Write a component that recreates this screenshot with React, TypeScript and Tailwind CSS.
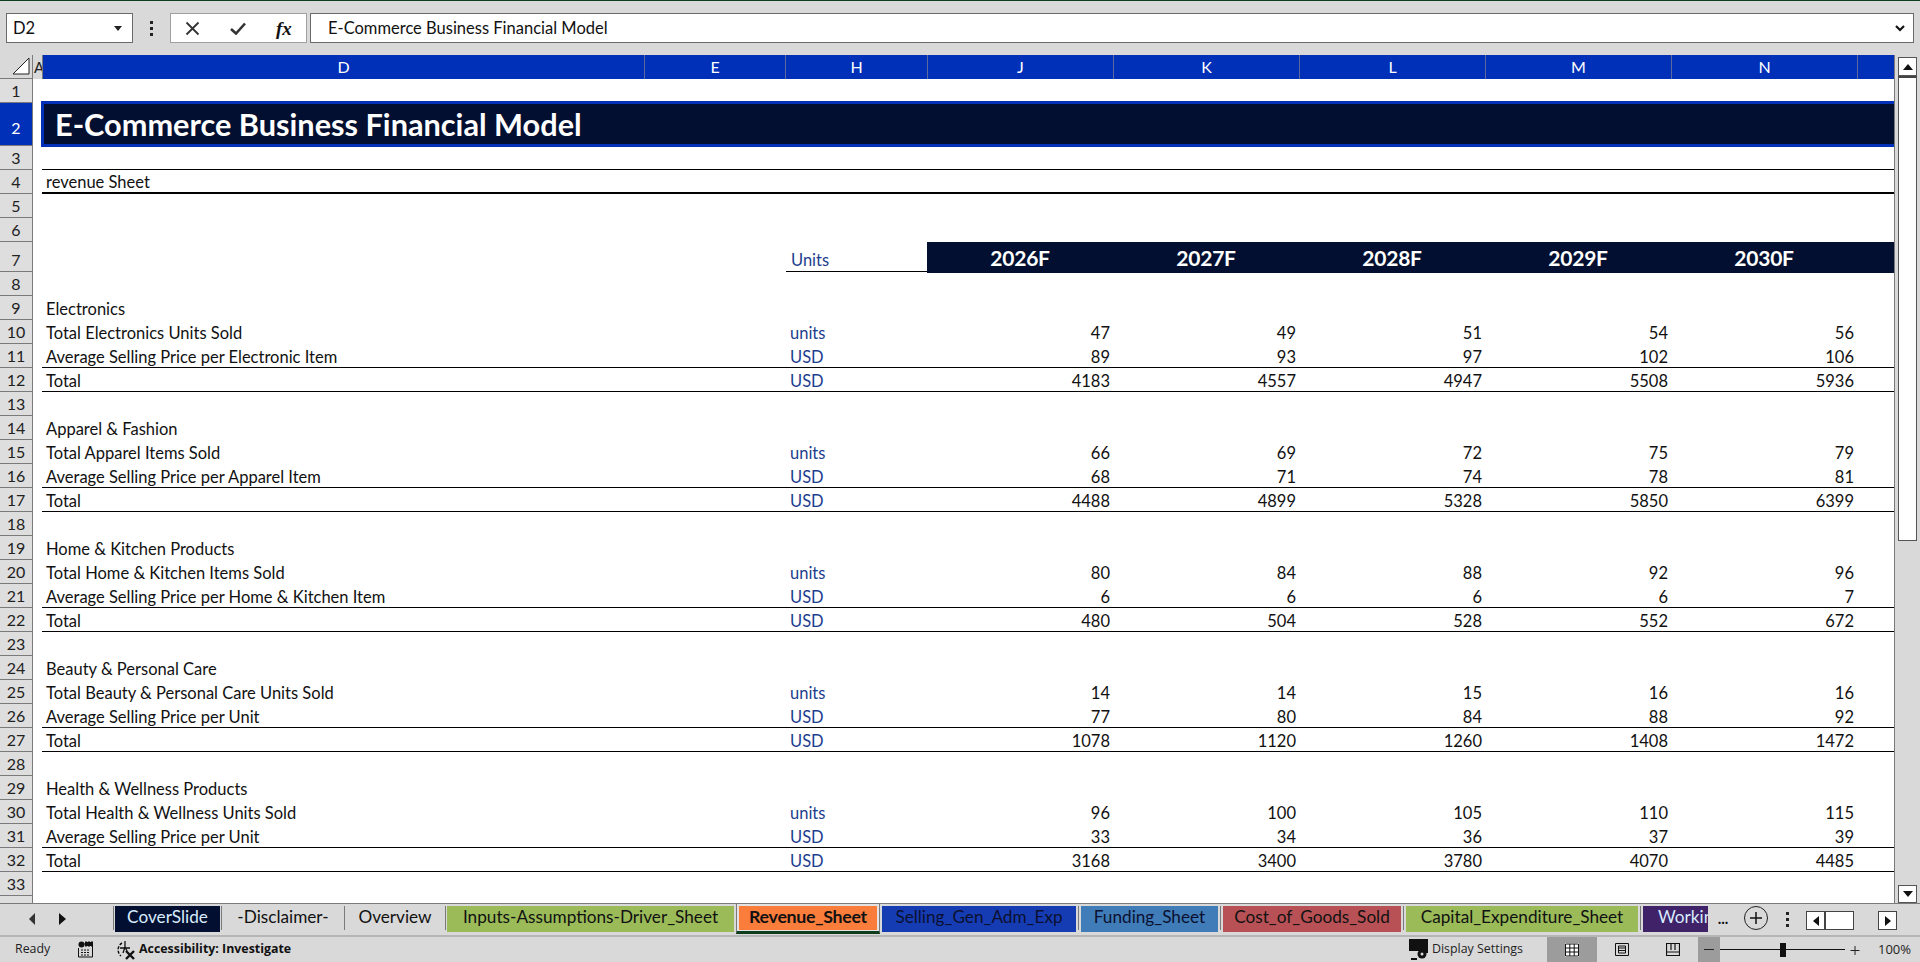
const font = { fontFamily: '"Lato", "Liberation Sans", sans-serif' };
const ui = { fontFamily: '"Open Sans", "Liberation Sans", sans-serif' };

const years = ["2026F", "2027F", "2028F", "2029F", "2030F"];
const letters = ["J", "K", "L", "M", "N"];

type Section = {
  start: number;
  title: string;
  units: [string, (number | string)[]];
  price: [string, (number | string)[]];
  total: (number | string)[];
};

const sections: Section[] = [
  {
    start: 9,
    title: "Electronics",
    units: ["Total Electronics Units Sold", [47, 49, 51, 54, 56]],
    price: ["Average Selling Price per Electronic Item", [89, 93, 97, 102, 106]],
    total: [4183, 4557, 4947, 5508, 5936],
  },
  {
    start: 14,
    title: "Apparel & Fashion",
    units: ["Total Apparel Items Sold", [66, 69, 72, 75, 79]],
    price: ["Average Selling Price per Apparel Item", [68, 71, 74, 78, 81]],
    total: [4488, 4899, 5328, 5850, 6399],
  },
  {
    start: 19,
    title: "Home & Kitchen Products",
    units: ["Total Home & Kitchen Items Sold", [80, 84, 88, 92, 96]],
    price: ["Average Selling Price per Home & Kitchen Item", [6, 6, 6, 6, 7]],
    total: [480, 504, 528, 552, 672],
  },
  {
    start: 24,
    title: "Beauty & Personal Care",
    units: ["Total Beauty & Personal Care Units Sold", [14, 14, 15, 16, 16]],
    price: ["Average Selling Price per Unit", [77, 80, 84, 88, 92]],
    total: [1078, 1120, 1260, 1408, 1472],
  },
  {
    start: 29,
    title: "Health & Wellness Products",
    units: ["Total Health & Wellness Units Sold", [96, 100, 105, 110, 115]],
    price: ["Average Selling Price per Unit", [33, 34, 36, 37, 39]],
    total: [3168, 3400, 3780, 4070, 4485],
  },
];

function RowHead({ n, active, h = "h-[24px]" }: { n?: number; active?: boolean; h?: string }) {
  return (
    <div
      className={`${h} w-[33px] shrink-0 flex items-end justify-center border-r border-b border-[#7a7a7a] text-[16px] leading-[20px] ${
        active ? "bg-[#0030b8] text-white pb-[7px]" : "bg-[#dedede] text-[#222] pb-[1px]"
      }`}
    >
      {n}
    </div>
  );
}

function Row({
  n,
  line,
  label,
  unit,
  values,
}: {
  n?: number;
  line?: boolean;
  label?: string;
  unit?: string;
  values?: (number | string)[];
}) {
  return (
    <div className="flex h-[24px]">
      <RowHead n={n} />
      <div className="w-[9px] shrink-0" />
      <div className={`flex flex-1 items-end leading-[20px] text-[16.5px] text-[#111] ${line ? "border-b border-black" : "mb-[1px]"}`}>
        <div className="w-[603px] pl-[4px] whitespace-nowrap">{label}</div>
        <div className="w-[141px]" />
        <div className="w-[142px] pl-[4px] text-[#1d3e8e]">{unit}</div>
        {values?.map((v, i) => (
          <div key={i} className="w-[186px] pr-[4px] text-right">
            {v}
          </div>
        ))}
      </div>
    </div>
  );
}

function ColHead({ label, w }: { label: string; w: string }) {
  return (
    <div className={`${w} shrink-0 h-full flex items-center justify-center text-white text-[16px] border-r border-[#5b6a9c]`}>
      {label}
    </div>
  );
}

function Sheet() {
  const rows = [];
  for (const s of sections) {
    rows.push(<Row key={s.start} n={s.start} label={s.title} />);
    rows.push(<Row key={s.start + 1} n={s.start + 1} label={s.units[0]} unit="units" values={s.units[1]} />);
    rows.push(<Row key={s.start + 2} n={s.start + 2} line label={s.price[0]} unit="USD" values={s.price[1]} />);
    rows.push(<Row key={s.start + 3} n={s.start + 3} line label="Total" unit="USD" values={s.total} />);
    rows.push(<Row key={s.start + 4} n={s.start + 4} />);
  }
  return (
    <div className="w-[1895px] shrink-0 h-full overflow-hidden border-r border-[#7a7a7a] bg-white" style={font}>
      <div className="flex h-[24px]">
        <div className="w-[33px] shrink-0 h-full border-r border-b border-[#7a7a7a] flex items-end justify-end pr-[2px] pb-[3px] bg-[#d9d9d9]">
          <svg width="18" height="18" viewBox="0 0 18 18">
            <path d="M17 1V17H1Z" fill="#fff" stroke="#222" strokeWidth="1" />
          </svg>
        </div>
        <div className="w-[10px] shrink-0 h-full overflow-hidden bg-[#d9d9d9] border-r border-[#7a7a7a] text-[15px] leading-[24px] text-[#222] pl-[1px]">A</div>
        <div className="flex flex-1 h-full bg-[#0030b8]">
          <ColHead label="D" w="w-[602px]" />
          <ColHead label="E" w="w-[141px]" />
          <ColHead label="H" w="w-[142px]" />
          {letters.map((l) => (
            <ColHead key={l} label={l} w="w-[186px]" />
          ))}
        </div>
      </div>
      <Row n={1} />
      <div className="flex h-[43px]">
        <RowHead n={2} active h="h-[43px]" />
        <div className="w-[8px] shrink-0" />
        <div className="flex-1 h-[46px] -mt-[2px] relative border-y-[3px] border-l-[3px] border-[#0030b8] bg-[#030f30] flex items-center pl-[11px] pt-[3px] text-white font-bold text-[30.7px]">
          E-Commerce Business Financial Model
        </div>
      </div>
      <Row n={3} line />
      <div className="flex h-[24px]">
        <RowHead n={4} />
        <div className="w-[9px] shrink-0" />
        <div className="flex-1 border-b-2 border-black pl-[4px] text-[16.5px] leading-[22px] pt-[1px] text-[#111]">revenue Sheet</div>
      </div>
      <Row n={5} />
      <Row n={6} />
      <div className="flex h-[30px]">
        <RowHead n={7} h="h-[30px]" />
        <div className="w-[9px] shrink-0" />
        <div className="w-[744px] shrink-0" />
        <div className="w-[141px] shrink-0 border-b border-black pl-[5px] text-[16.5px] leading-[20px] pt-[8px] text-[#1d3e8e]">Units</div>
        <div className="flex flex-1 h-[31px] bg-[#030f30] relative">
          {years.map((y) => (
            <div key={y} className="w-[186px] flex items-center justify-center text-white font-bold text-[21px] tracking-[-0.2px] pt-[1px]">
              {y}
            </div>
          ))}
        </div>
      </div>
      <Row n={8} />
      {rows}
      <Row />
    </div>
  );
}

function Scrollbar() {
  return (
    <div className="flex-1 flex flex-col items-center pt-[2px]">
      <div className="w-[19px] h-[19px] bg-white border border-[#555] flex items-center justify-center">
        <svg width="10" height="6" viewBox="0 0 10 6"><path d="M5 0L10 6H0Z" fill="#111" /></svg>
      </div>
      <div className="w-[19px] h-[465px] bg-white border border-t-2 border-[#555] border-t-[#444]" />
      <div className="flex-1" />
      <div className="w-[19px] h-[18px] bg-white border border-[#555] flex items-center justify-center">
        <svg width="10" height="6" viewBox="0 0 10 6"><path d="M0 0H10L5 6Z" fill="#111" /></svg>
      </div>
    </div>
  );
}

function Sep({ wide }: { wide?: boolean }) {
  return <div className={`w-[1px] h-[24px] bg-[#7a7a7a] shrink-0 ${wide ? "mx-[2px]" : "mx-[1px]"}`} />;
}

function Tab({ label, w, cls }: { label: string; w: string; cls: string }) {
  return (
    <div className={`${w} h-[26px] shrink-0 flex items-center justify-center overflow-hidden whitespace-nowrap text-[17.2px] pb-[4px] ${cls}`}>
      {label}
    </div>
  );
}

function TabBar() {
  return (
    <div className="h-[32px] shrink-0 flex border-t border-[#7a7a7a] pt-[2px] bg-[#d9d9d9]" style={font}>
      <div className="w-[112px] shrink-0 flex items-center pl-[29px] gap-[23px] h-[26px]">
        <svg width="7" height="12" viewBox="0 0 7 12"><path d="M6 0V12L0 6Z" fill="#333" /></svg>
        <svg width="7" height="12" viewBox="0 0 7 12"><path d="M0 0V12L7 6Z" fill="#111" /></svg>
      </div>
      <Sep />
      <Tab label="CoverSlide" w="w-[105px]" cls="bg-[#030f30] text-[#d8ecff]" />
      <Sep />
      <Tab label="-Disclaimer-" w="w-[120px]" cls="text-[#111]" />
      <Sep />
      <Tab label="Overview" w="w-[98px]" cls="text-[#111]" />
      <Sep />
      <Tab label="Inputs-Assumptions-Driver_Sheet" w="w-[287px]" cls="bg-[#9bbb59] text-[#111]" />
      <div className="w-[144px] h-[30px] -mt-[2px] shrink-0 ml-[2px] bg-[#e3e3e3] border-l border-r border-[#7a7a7a] border-b-[3px] border-b-[#0e3d1e] px-[2px] pt-[2px] pb-[1px]">
        <div className="h-full bg-[#fb7d3c] flex items-center justify-center text-[17.8px] font-bold tracking-[-0.3px] pb-[3px] text-[#111]">Revenue_Sheet</div>
      </div>
      <div className="w-[2px]" />
      <Tab label="Selling_Gen_Adm_Exp" w="w-[194px]" cls="bg-[#163cb4] text-[#0b1030]" />
      <Sep wide />
      <Tab label="Funding_Sheet" w="w-[137px]" cls="bg-[#3f7cb8] text-[#0b1030]" />
      <Sep wide />
      <Tab label="Cost_of_Goods_Sold" w="w-[178px]" cls="bg-[#b85155] text-[#111]" />
      <Sep wide />
      <Tab label="Capital_Expenditure_Sheet" w="w-[232px]" cls="bg-[#9bbb59] text-[#111]" />
      <Sep wide />
      <div className="w-[65px] h-[26px] shrink-0 overflow-hidden whitespace-nowrap bg-[#3f2268] text-[#d8ecff] text-[17.2px] pl-[15px] leading-[22px]">Working</div>
      <div className="w-[30px] shrink-0 text-center text-[#111] text-[15px] leading-[24px] font-bold">...</div>
      <div className="w-[24px] h-[24px] ml-[6px] shrink-0 rounded-full border border-[#222] flex items-center justify-center">
        <svg width="14" height="14" viewBox="0 0 14 14"><path d="M7 1V13M1 7H13" stroke="#111" strokeWidth="1.5" /></svg>
      </div>
      <div className="w-[4px] ml-[17px] h-[26px] shrink-0 flex flex-col items-center justify-center gap-[3px]">
        <div className="w-[3px] h-[3px] bg-[#222]" />
        <div className="w-[3px] h-[3px] bg-[#222]" />
        <div className="w-[3px] h-[3px] bg-[#222]" />
      </div>
      <div className="ml-[17px] mt-[5px] w-[48px] h-[19px] shrink-0 border border-[#444] bg-white flex">
        <div className="w-[19px] border-r-2 border-[#444] flex items-center justify-center">
          <svg width="6" height="10" viewBox="0 0 6 10"><path d="M6 0V10L0 5Z" fill="#111" /></svg>
        </div>
      </div>
      <div className="ml-[24px] mt-[5px] w-[19px] h-[19px] shrink-0 border border-[#444] bg-white flex items-center justify-center">
        <svg width="6" height="10" viewBox="0 0 6 10"><path d="M0 0V10L6 5Z" fill="#111" /></svg>
      </div>
    </div>
  );
}

function StatusBar() {
  return (
    <div className="flex-1 flex items-center border-t-2 border-[#b5b5b5] bg-[#d9d9d9] text-[#222] text-[12.4px]" style={ui}>
      <div className="w-[78px] pl-[15px] shrink-0">Ready</div>
      <svg width="15" height="17" viewBox="0 0 15 17" className="shrink-0">
        <circle cx="3.5" cy="3.5" r="3" fill="#111" />
        <path d="M7 1.5H14.5V16H.5V7" fill="none" stroke="#111" />
        <path d="M7 1H15V5H7ZM3 9H12M3 11.5H12M3 14H12" fill="#111" stroke="#111" strokeDasharray="2 1" />
      </svg>
      <svg width="22" height="20" viewBox="0 0 22 20" className="ml-[22px] shrink-0">
        <path d="M7 3A8 8 0 0 0 6 16" fill="none" stroke="#111" strokeWidth="1.5" strokeDasharray="3 1.5" />
        <path d="M10 1V7M5 8H15M10 7L8 13M10 7L12 11" fill="none" stroke="#111" strokeWidth="1.3" />
        <path d="M11 11L19 19M19 11L11 19" stroke="#111" strokeWidth="2.4" />
      </svg>
      <div className="ml-[2px] font-bold text-[#111] whitespace-nowrap">Accessibility: Investigate</div>
      <div className="flex-1" />
      <div className="w-[511px] h-full shrink-0 flex items-center">
        <svg width="22" height="22" viewBox="0 0 22 22" className="shrink-0">
          <path d="M0 0H19V14H12V12H0Z" fill="#111" />
          <circle cx="13" cy="15" r="4.5" fill="#111" />
          <circle cx="13" cy="15" r="1.5" fill="#d9d9d9" />
          <path d="M2 20H8" stroke="#111" strokeWidth="2" />
        </svg>
        <div className="ml-[1px] whitespace-nowrap">Display Settings</div>
        <div className="flex-1" />
        <div className="w-[373px] h-full shrink-0 flex items-center">
          <div className="w-[50px] h-full shrink-0 bg-[#9c9c9c] flex items-center justify-center">
            <svg width="14" height="14" viewBox="0 0 14 14" className="bg-white">
              <path d="M.5 1H13.5V13H.5ZM.5 5H13.5M.5 9H13.5M4.8 1V13M9.2 1V13" fill="none" stroke="#111" />
            </svg>
          </div>
          <div className="w-[50px] shrink-0 flex justify-center">
            <svg width="14" height="13" viewBox="0 0 14 13">
              <path d="M.5 .5H13.5V12.5H.5ZM3.5 3H10.5V10H3.5ZM4 5H10M4 7.5H10" fill="none" stroke="#111" />
            </svg>
          </div>
          <div className="w-[51px] shrink-0 flex justify-center">
            <svg width="14" height="13" viewBox="0 0 14 13">
              <path d="M.5 .5H13.5V12.5H.5ZM.5 9H13.5M5 .5V7M9 .5V7" fill="none" stroke="#111" strokeWidth="1.2" />
            </svg>
          </div>
          <div className="w-[22px] h-full shrink-0 bg-[#9c9c9c] flex items-center justify-center">
            <div className="w-[10px] h-[1px] bg-[#222]" />
          </div>
          <div className="w-[125px] shrink-0 h-[14px] relative flex items-center">
            <div className="w-full h-[1px] bg-[#111]" />
            <div className="absolute left-[60px] top-0 w-[6px] h-[14px] bg-[#111]" />
          </div>
          <svg width="12" height="12" viewBox="0 0 12 12" className="ml-[4px] shrink-0">
            <path d="M6 2V11M1.5 6.5H10.5" stroke="#222" />
          </svg>
          <div className="ml-[17px] text-[13px] whitespace-nowrap">100%</div>
        </div>
      </div>
    </div>
  );
}

export default function App() {
  return (
    <div className="w-[1920px] h-[962px] flex flex-col overflow-hidden bg-[#d9d9d9]">
      <div className="h-[1px] bg-[#0e3d1e]" />
      <div className="h-[54px] shrink-0 flex pt-[12px] pl-[6px] pr-[6px] pb-[12px]" style={font}>
        <div className="w-[127px] h-full bg-white border border-[#6a6a6a] flex items-center justify-between pl-[6px] pr-[10px] text-[16.5px] text-[#111]">
          D2
          <svg width="8" height="5" viewBox="0 0 8 5"><path d="M0 0H8L4 5Z" fill="#222" /></svg>
        </div>
        <div className="w-[37px] flex flex-col items-center justify-center gap-[3px]">
          <div className="w-[3px] h-[3px] bg-[#222]" />
          <div className="w-[3px] h-[3px] bg-[#222]" />
          <div className="w-[3px] h-[3px] bg-[#222]" />
        </div>
        <div className="w-[137px] h-full bg-white border border-[#a0a0a0] flex items-center pl-[14px] shrink-0">
          <svg width="15" height="15" viewBox="0 0 15 15"><path d="M1.5 1.5L13.5 13.5M13.5 1.5L1.5 13.5" stroke="#333" strokeWidth="1.8" /></svg>
          <svg width="16" height="13" viewBox="0 0 16 13" className="ml-[30px]"><path d="M1 7L6 11.5L15 1.5" fill="none" stroke="#333" strokeWidth="2.6" /></svg>
          <span className="ml-[30px] font-bold italic text-[19px] leading-none text-[#111]" style={{ fontFamily: '"Liberation Serif", serif' }}>fx</span>
        </div>
        <div className="ml-[3px] flex-1 h-full bg-white border border-[#6a6a6a] flex items-center justify-between pl-[17px] pr-[8px] text-[16.5px] text-[#111]">
          E-Commerce Business Financial Model
          <svg width="10" height="7" viewBox="0 0 10 7"><path d="M1 1L5 5L9 1" fill="none" stroke="#111" strokeWidth="2.2" /></svg>
        </div>
      </div>
      <div className="h-[848px] shrink-0 flex">
        <Sheet />
        <Scrollbar />
      </div>
      <TabBar />
      <StatusBar />
    </div>
  );
}
